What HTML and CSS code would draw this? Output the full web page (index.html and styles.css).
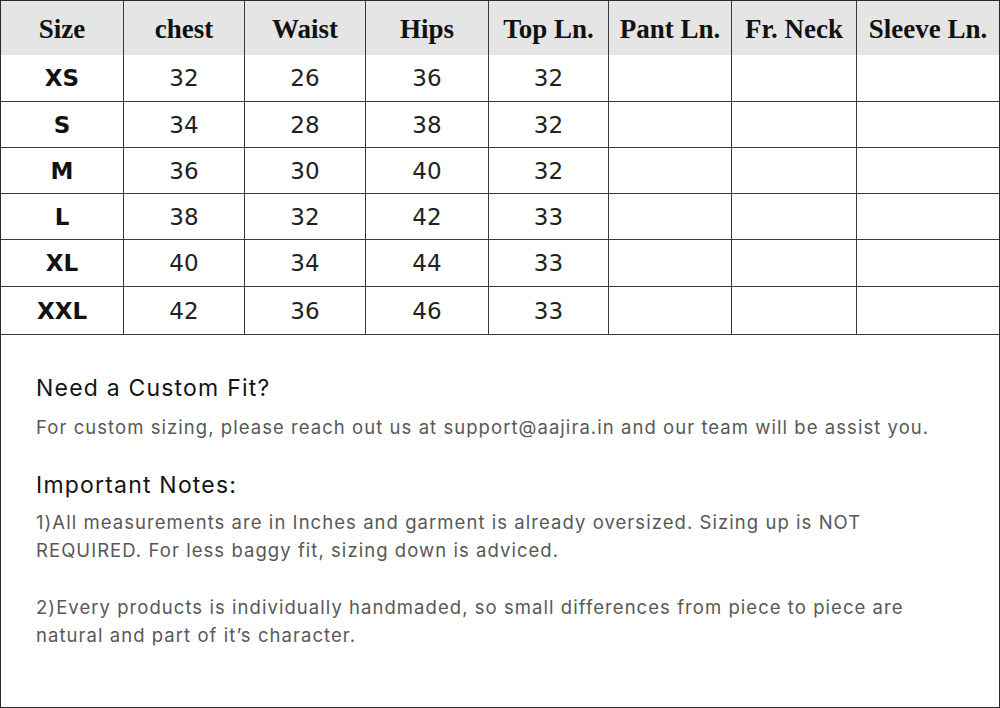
FILE: index.html
```html
<!DOCTYPE html>
<html lang="en">
<head>
<meta charset="utf-8">
<title>Size Chart</title>
<link rel="stylesheet" href="styles.css">
</head>
<body>
<div class="sheet">
  <div class="chart">
    <div class="cell head">Size</div>
    <div class="cell head">chest</div>
    <div class="cell head">Waist</div>
    <div class="cell head">Hips</div>
    <div class="cell head">Top Ln.</div>
    <div class="cell head">Pant Ln.</div>
    <div class="cell head">Fr. Neck</div>
    <div class="cell head last">Sleeve Ln.</div>

    <div class="cell size">XS</div><div class="cell">32</div><div class="cell">26</div><div class="cell">36</div><div class="cell">32</div><div class="cell"></div><div class="cell"></div><div class="cell last"></div>
    <div class="cell size">S</div><div class="cell">34</div><div class="cell">28</div><div class="cell">38</div><div class="cell">32</div><div class="cell"></div><div class="cell"></div><div class="cell last"></div>
    <div class="cell size">M</div><div class="cell">36</div><div class="cell">30</div><div class="cell">40</div><div class="cell">32</div><div class="cell"></div><div class="cell"></div><div class="cell last"></div>
    <div class="cell size">L</div><div class="cell">38</div><div class="cell">32</div><div class="cell">42</div><div class="cell">33</div><div class="cell"></div><div class="cell"></div><div class="cell last"></div>
    <div class="cell size">XL</div><div class="cell">40</div><div class="cell">34</div><div class="cell">44</div><div class="cell">33</div><div class="cell"></div><div class="cell"></div><div class="cell last"></div>
    <div class="cell size">XXL</div><div class="cell">42</div><div class="cell">36</div><div class="cell">46</div><div class="cell">33</div><div class="cell"></div><div class="cell"></div><div class="cell last"></div>
  </div>
  <div class="notes">
    <h2 class="title">Need a Custom Fit?</h2>
    <p class="text">For custom sizing, please reach out us at support@aajira.in and our team will be assist you.</p>
    <h2 class="title title-notes">Important Notes:</h2>
    <p class="text text-first">1)All measurements are in Inches and garment is already oversized. Sizing up is NOT REQUIRED. For less baggy fit, sizing down is adviced.</p>
    <p class="text text-gap">2)Every products is individually handmaded, so small differences from piece to piece are natural and part of it’s character.</p>
  </div>
</div>
</body>
</html>
```
FILE: styles.css
```css
* { box-sizing: border-box; }
html, body { margin: 0; padding: 0; background: #ffffff; }
.sheet {
  width: 1000px;
  height: 708px;
  border: 1px solid #2a2a2a;
  background: #ffffff;
  overflow: hidden;
}
.chart {
  display: grid;
  grid-template-columns: 123px 121px 121px 123px 120px 123px 125px 142px;
  grid-template-rows: 54px 47px 46px 46px 46px 47px 48px;
}
.cell {
  display: flex;
  align-items: center;
  justify-content: center;
  border-right: 1px solid #3a3a3a;
  border-bottom: 1px solid #3a3a3a;
  font-family: "DejaVu Sans", sans-serif;
  font-size: 23px;
  color: #222222;
}
.cell.last { border-right: none; }
.cell.head {
  background: #e5e5e5;
  border-bottom: none;
  font-family: "Liberation Serif", "DejaVu Serif", serif;
  font-weight: 700;
  font-size: 27px;
  color: #111111;
  padding-top: 2px;
}
.cell.size { font-weight: 700; color: #111111; }
.notes {
  padding: 36px 50px 0 35px;
  font-family: Inter, "Open Sans", sans-serif;
}
.title {
  margin: 0;
  font-size: 23px;
  font-weight: 400;
  line-height: 34px;
  letter-spacing: 1.2px;
  color: #141414;
}
.title-notes { margin-top: 27px; }
.text {
  margin: 8px 0 0;
  font-size: 18.5px;
  line-height: 28px;
  letter-spacing: 1.05px;
  color: #585858;
}
.text-first { margin-top: 6px; }
.text-gap { margin-top: 29px; }
```
